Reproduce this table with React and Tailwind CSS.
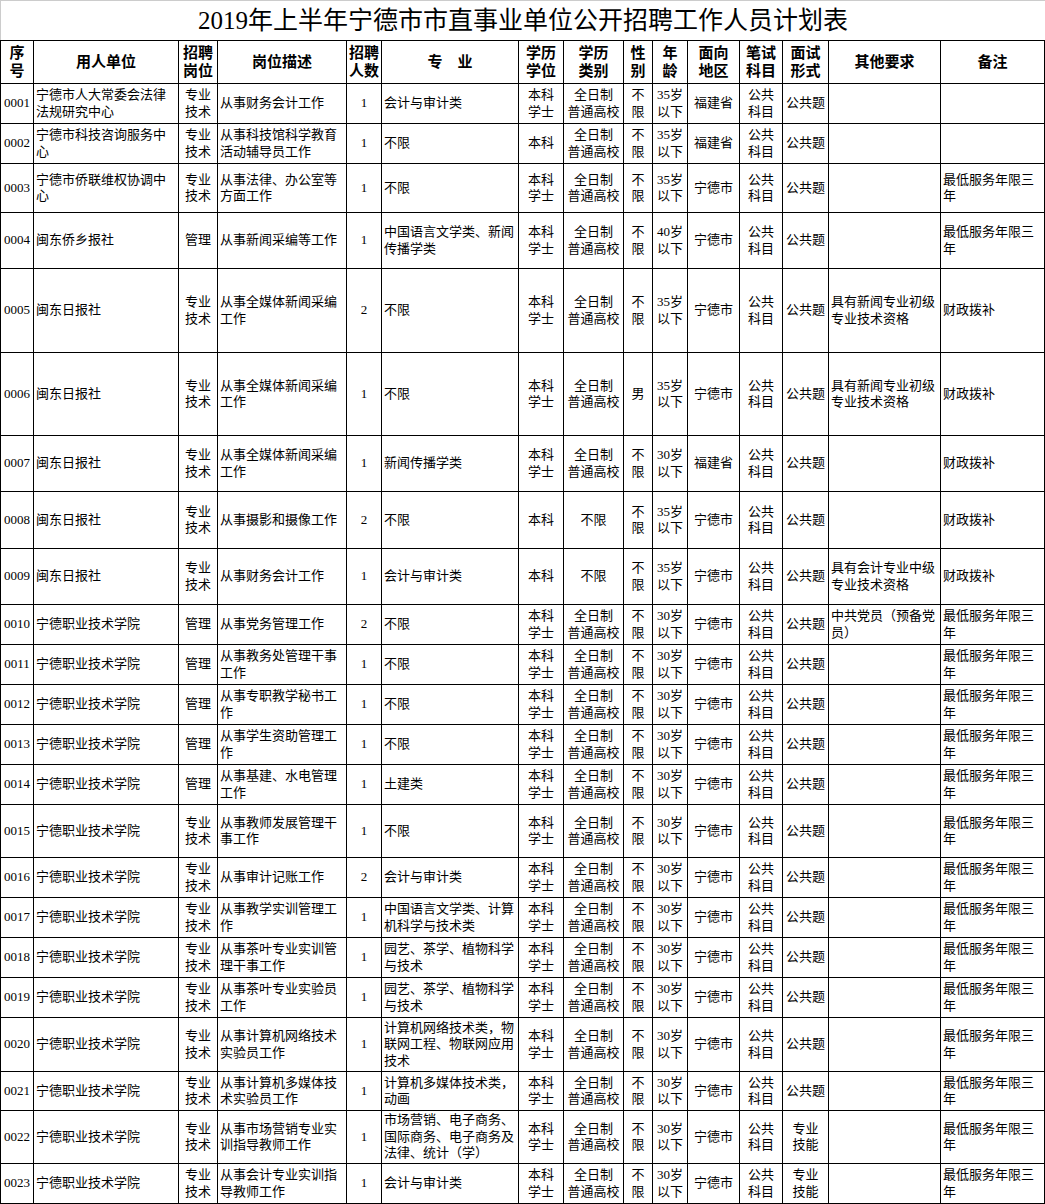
import React from "react";

// 15 columns, widths between the 1px rules
const COLS =
  "grid grid-cols-[32px_144px_38px_128px_34px_136px_44px_59px_28px_34px_51px_42px_45px_111px_103px] gap-px";

// l = left aligned, c = centered
const ALIGN = ["c", "l", "c", "l", "c", "l", "c", "c", "c", "c", "c", "c", "c", "l", "l"];

const HEADER = [
  "序\n号",
  "用人单位",
  "招聘\n岗位",
  "岗位描述",
  "招聘\n人数",
  "专\u3000业",
  "学历\n学位",
  "学历\n类别",
  "性\n别",
  "年\n龄",
  "面向\n地区",
  "笔试\n科目",
  "面试\n形式",
  "其他要求",
  "备注",
];

const MIN3 = "最低服务年限三\n年";
const ZY = "专业\n技术";
const BKXS = "本科\n学士";
const QRZ = "全日制\n普通高校";
const BX = "不\n限";
const GGKM = "公共\n科目";
const XY = "宁德职业技术学院";

const rows = [
  { h: "h-[39px]", c: ["0001", "宁德市人大常委会法律\n法规研究中心", ZY, "从事财务会计工作", "1", "会计与审计类", BKXS, QRZ, BX, "35岁\n以下", "福建省", GGKM, "公共题", "", ""] },
  { h: "h-[39px]", c: ["0002", "宁德市科技咨询服务中\n心", ZY, "从事科技馆科学教育\n活动辅导员工作", "1", "不限", "本科", QRZ, BX, "35岁\n以下", "福建省", GGKM, "公共题", "", ""] },
  { h: "h-[48px]", c: ["0003", "宁德市侨联维权协调中\n心", ZY, "从事法律、办公室等\n方面工作", "1", "不限", BKXS, QRZ, BX, "35岁\n以下", "宁德市", GGKM, "公共题", "", MIN3] },
  { h: "h-[55px]", c: ["0004", "闽东侨乡报社", "管理", "从事新闻采编等工作", "1", "中国语言文学类、新闻\n传播学类", BKXS, QRZ, BX, "40岁\n以下", "宁德市", GGKM, "公共题", "", MIN3] },
  { h: "h-[83px]", c: ["0005", "闽东日报社", ZY, "从事全媒体新闻采编\n工作", "2", "不限", BKXS, QRZ, BX, "35岁\n以下", "宁德市", GGKM, "公共题", "具有新闻专业初级\n专业技术资格", "财政拨补"] },
  { h: "h-[82px]", c: ["0006", "闽东日报社", ZY, "从事全媒体新闻采编\n工作", "1", "不限", BKXS, QRZ, "男", "35岁\n以下", "宁德市", GGKM, "公共题", "具有新闻专业初级\n专业技术资格", "财政拨补"] },
  { h: "h-[55px]", c: ["0007", "闽东日报社", ZY, "从事全媒体新闻采编\n工作", "1", "新闻传播学类", BKXS, QRZ, BX, "30岁\n以下", "福建省", GGKM, "公共题", "", "财政拨补"] },
  { h: "h-[56px]", c: ["0008", "闽东日报社", ZY, "从事摄影和摄像工作", "2", "不限", "本科", "不限", BX, "35岁\n以下", "宁德市", GGKM, "公共题", "", "财政拨补"] },
  { h: "h-[55px]", c: ["0009", "闽东日报社", ZY, "从事财务会计工作", "1", "会计与审计类", "本科", "不限", BX, "35岁\n以下", "宁德市", GGKM, "公共题", "具有会计专业中级\n专业技术资格", "财政拨补"] },
  { h: "h-[39px]", c: ["0010", XY, "管理", "从事党务管理工作", "2", "不限", BKXS, QRZ, BX, "30岁\n以下", "宁德市", GGKM, "公共题", "中共党员（预备党\n员）", MIN3] },
  { h: "h-[39px]", c: ["0011", XY, "管理", "从事教务处管理干事\n工作", "1", "不限", BKXS, QRZ, BX, "30岁\n以下", "宁德市", GGKM, "公共题", "", MIN3] },
  { h: "h-[39px]", c: ["0012", XY, "管理", "从事专职教学秘书工\n作", "1", "不限", BKXS, QRZ, BX, "30岁\n以下", "宁德市", GGKM, "公共题", "", MIN3] },
  { h: "h-[39px]", c: ["0013", XY, "管理", "从事学生资助管理工\n作", "1", "不限", BKXS, QRZ, BX, "30岁\n以下", "宁德市", GGKM, "公共题", "", MIN3] },
  { h: "h-[39px]", c: ["0014", XY, "管理", "从事基建、水电管理\n工作", "1", "土建类", BKXS, QRZ, BX, "30岁\n以下", "宁德市", GGKM, "公共题", "", MIN3] },
  { h: "h-[52px]", c: ["0015", XY, ZY, "从事教师发展管理干\n事工作", "1", "不限", BKXS, QRZ, BX, "30岁\n以下", "宁德市", GGKM, "公共题", "", MIN3] },
  { h: "h-[39px]", c: ["0016", XY, ZY, "从事审计记账工作", "2", "会计与审计类", BKXS, QRZ, BX, "30岁\n以下", "宁德市", GGKM, "公共题", "", MIN3] },
  { h: "h-[39px]", c: ["0017", XY, ZY, "从事教学实训管理工\n作", "1", "中国语言文学类、计算\n机科学与技术类", BKXS, QRZ, BX, "30岁\n以下", "宁德市", GGKM, "公共题", "", MIN3] },
  { h: "h-[39px]", c: ["0018", XY, ZY, "从事茶叶专业实训管\n理干事工作", "1", "园艺、茶学、植物科学\n与技术", BKXS, QRZ, BX, "30岁\n以下", "宁德市", GGKM, "公共题", "", MIN3] },
  { h: "h-[39px]", c: ["0019", XY, ZY, "从事茶叶专业实验员\n工作", "1", "园艺、茶学、植物科学\n与技术", BKXS, QRZ, BX, "30岁\n以下", "宁德市", GGKM, "公共题", "", MIN3] },
  { h: "h-[53px]", c: ["0020", XY, ZY, "从事计算机网络技术\n实验员工作", "1", "计算机网络技术类，物\n联网工程、物联网应用\n技术", BKXS, QRZ, BX, "30岁\n以下", "宁德市", GGKM, "公共题", "", MIN3] },
  { h: "h-[38px]", c: ["0021", XY, ZY, "从事计算机多媒体技\n术实验员工作", "1", "计算机多媒体技术类，\n动画", BKXS, QRZ, BX, "30岁\n以下", "宁德市", GGKM, "公共题", "", MIN3] },
  { h: "h-[52px]", c: ["0022", XY, ZY, "从事市场营销专业实\n训指导教师工作", "1", "市场营销、电子商务、\n国际商务、电子商务及\n法律、统计（学）", BKXS, QRZ, BX, "30岁\n以下", "宁德市", GGKM, "专业\n技能", "", MIN3] },
  { h: "h-[39px]", c: ["0023", XY, ZY, "从事会计专业实训指\n导教师工作", "1", "会计与审计类", BKXS, QRZ, BX, "30岁\n以下", "宁德市", GGKM, "专业\n技能", "", MIN3] },
];

const Cell = ({ text, align, header }) => (
  <div
    className={
      "bg-white flex items-center whitespace-pre-line overflow-hidden " +
      (header
        ? "justify-center text-center font-bold text-[15px] leading-[18px]"
        : align === "l"
        ? "justify-start text-left pl-[2px] text-[13px] leading-[16.5px]"
        : "justify-center text-center text-[13px] leading-[16.5px]")
    }
  >
    {text}
  </div>
);

const App = () => {
  return (
    <div className="w-[1045px] bg-white text-black font-['Liberation_Serif','Noto_Sans_CJK_SC',serif]">
      <div className="h-[40px] flex items-center justify-center border-t border-l border-[#cccccc] text-[25px] leading-none">
        2019年上半年宁德市市直事业单位公开招聘工作人员计划表
      </div>

      <div className="flex flex-col gap-px bg-black border border-black">
        <div className={`${COLS} h-[42px]`}>
          {HEADER.map((t, i) => (
            <Cell key={i} text={t} header />
          ))}
        </div>
        {rows.map((r) => (
          <div key={r.c[0]} className={`${COLS} ${r.h}`}>
            {r.c.map((t, i) => (
              <Cell key={i} text={t} align={ALIGN[i]} />
            ))}
          </div>
        ))}
      </div>
    </div>
  );
};

export default App;
